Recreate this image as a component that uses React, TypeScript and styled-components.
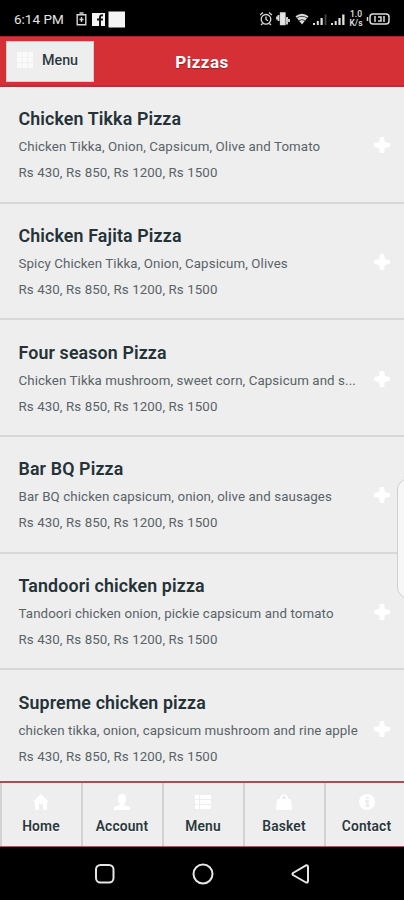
import React from 'react';
import styled, { createGlobalStyle } from 'styled-components';

const GlobalStyle = createGlobalStyle`
  * { box-sizing: border-box; }
  body { margin: 0; background: #000; font-family: Roboto, "Liberation Sans", sans-serif; }
`;

const Screen = styled.div`
  width: 404px;
  height: 900px;
  position: relative;
  display: flex;
  flex-direction: column;
  overflow: hidden;
  background: #000;
`;

const StatusBar = styled.div`
  height: 36px;
  flex: none;
  display: flex;
  align-items: center;
  justify-content: space-between;
  padding: 1px 13px 0 14px;
  color: #e4e4e4;
`;

const Clock = styled.span`
  width: 62px;
  font-size: 13.5px;
  line-height: 18px;
  padding-top: 1px;
`;

const StatusGroup = styled.div`
  display: flex;
  align-items: center;
`;

const Speed = styled.div`
  width: 16px;
  margin-right: 2px;
  font-size: 8.5px;
  line-height: 9px;
  font-weight: 500;
  text-align: center;
`;

const Header = styled.header`
  height: 51px;
  flex: none;
  display: grid;
  grid-template-columns: 1fr auto 1fr;
  align-items: center;
  padding: 0 6px;
  background: #d63037;
  border-top: 1px solid #a3272b;
  border-bottom: 2px solid #a9383c;
`;

const MenuButton = styled.button`
  width: 88px;
  height: 41px;
  padding: 0 0 2px 10px;
  display: flex;
  align-items: center;
  gap: 9px;
  border: 1px solid #d5cccc;
  background: #eeeeee;
  color: #2b383d;
  font: 500 14.3px/20px Roboto, sans-serif;
  text-shadow: 0 1px 0 #fff;
`;

const Title = styled.h1`
  margin: 2px 0 0;
  font-size: 17px;
  letter-spacing: 0.5px;
  font-weight: 700;
  line-height: 22px;
  color: #fff;
  text-shadow: 0 1px 1px #8d2328;
`;

const List = styled.main`
  height: 694px;
  flex: none;
  overflow: hidden;
  background: #eeeeee;
`;

const Row = styled.article`
  height: 116.7px;
  padding: 20.4px 14px 0 18.5px;
  display: flex;
  justify-content: space-between;
  border-bottom: 2px solid #d8d8d8;
`;

const RowText = styled.div`
  width: 342px;
  white-space: nowrap;
`;

const Name = styled.h2`
  margin: 0 0 3px;
  font-size: 17.8px;
  letter-spacing: 0.14px;
  font-weight: 600;
  line-height: 24px;
  color: #253237;
`;

const Detail = styled.p`
  margin: 0;
  font-size: 13.3px;
  letter-spacing: 0.1px;
  line-height: 26px;
  color: #596368;
`;

const AddIcon = styled.svg`
  flex: none;
  margin-top: 28px;
  margin-right: -1px;
`;

const Tabs = styled.nav`
  height: 66px;
  flex: none;
  display: grid;
  grid-template-columns: repeat(4, 81px) 80px;
  background: #eeeeee;
  border-top: 2px solid #9f5155;
  border-bottom: 1px solid #a35b5f;
  overflow: hidden;
`;

const Tab = styled.div`
  display: flex;
  flex-direction: column;
  align-items: center;
  padding: 10px 1px 0 0;
  border-left: 2px solid #d2d2d2;
  color: #2b383d;
  font-size: 13.8px;
  letter-spacing: 0.15px;
  font-weight: 600;
  line-height: 18px;
  gap: 6px;
  text-shadow: 0 1px 0 #fff;

  &:last-child {
    padding: 10px 0 0 3px;
  }
`;

const SystemNav = styled.div`
  flex: 1;
  display: flex;
  justify-content: center;
  align-items: center;
  gap: 76px;
  padding-left: 1px;
`;

const EdgeHandle = styled.div`
  position: absolute;
  left: 397px;
  top: 478px;
  width: 24px;
  height: 121px;
  border: 1px solid #cfcfcf;
  border-radius: 14px;
  background: #f7f7f7;
`;

const prices = 'Rs 430, Rs 850, Rs 1200, Rs 1500';
const pizzas = [
  ['Chicken Tikka Pizza', 'Chicken Tikka, Onion, Capsicum, Olive and Tomato'],
  ['Chicken Fajita Pizza', 'Spicy Chicken Tikka, Onion, Capsicum, Olives'],
  ['Four season Pizza', 'Chicken Tikka mushroom, sweet corn, Capsicum and s...'],
  ['Bar BQ Pizza', 'Bar BQ chicken capsicum, onion, olive and sausages'],
  ['Tandoori chicken pizza', 'Tandoori chicken onion, pickie capsicum and tomato'],
  ['Supreme chicken pizza', 'chicken tikka, onion, capsicum mushroom and rine apple'],
];

const tabIcons: Record<string, React.ReactNode> = {
  Home: <path d="M9 1 1 9h2v8h4v-6h4v6h4V9h2z" />,
  Account: <path d="M9 1c3 0 4 2 4 5s-1 4-2 5v1l6 2v3H1v-3l6-2v-1C6 10 5 9 5 6s1-5 4-5z" />,
  Menu: <path d="M1 2h4v4H1zM6 2h11v4H6zM1 7h4v4H1zM6 7h11v4H6zM1 12h4v4H1zM6 12h11v4H6z" />,
  Basket: <path fillRule="evenodd" d="M2 6h3V5c0-5 8-5 8 0v1h3l1 11H1zM7 6h4V5c0-3-4-3-4 0z" />,
  Contact: <path fillRule="evenodd" d="M9 1a8 8 0 1 1 0 16A8 8 0 0 1 9 1zM8 4v2h3V4zM7 7v2h1v4H7v1h5v-1h-1V7z" />,
};

const Battery = () => (
  <svg width="11" height="14" viewBox="0 0 11 14" fill="none" stroke="#d8d8d8" strokeWidth="1.4">
    <path d="M1.2 2.7h8.6v10H1.2zM3.5 1h4M5.5 5v5M3.5 7.5h4" />
  </svg>
);

const StatusIcons = () => (
  <svg width="88" height="16" viewBox="0 0 88 16" fill="none" stroke="#dcdcdc" strokeWidth="1.3">
    <circle cx="6" cy="8.3" r="4.8" />
    <path d="M6 5.5v3l2 1.2M0 4l3-2.5M9 1.5 12 4M2.5 12.5 1 14M9.5 12.5 11 14" />
    <path d="M20.5 2h4.5v11.5h-4.5z" fill="#e5e5e5" />
    <path d="M18.5 4v6M17 5.5v3M27 6v7.5M29 8v3" strokeWidth="1.8" />
    <path d="M35.5 5.3q6.5-5 13 0L42 13.5z" fill="#dcdcdc" stroke="none" />
    <path d="M36.8 7q5.2-3.4 10.4 0M39 9.6q3-2 6 0" stroke="#333" strokeWidth="0.9" />
    <g fill="#e0e0e0" stroke="none">
      <path d="M53 12h2v2h-2zM56.8 10h2v4h-2zM60.5 7h2.2v7h-2.2z" />
      <path d="M64.6 3.5h1.8V14h-1.8z" fill="#444" />
      <path d="M71 12h2v2h-2zM74.7 10h2v4h-2zM78.4 7h2.2v7h-2.2zM82.2 3.5h2.3V14h-2.3z" />
    </g>
  </svg>
);

export default function App() {
  return (
    <>
      <GlobalStyle />
      <Screen>
        <StatusBar>
          <StatusGroup>
            <Clock>6:14 PM</Clock>
            <Battery />
            <svg width="39" height="18" viewBox="0 0 39 18">
              <path d="M5 3h13v13H5zM21.5 1.5H38v16H21.5z" fill="#f4f4f4" />
              <path d="M16 5.5q-3-.7-3 2V16M10 9.5h6" fill="none" stroke="#111" strokeWidth="2" />
            </svg>
          </StatusGroup>
          <StatusGroup>
            <StatusIcons />
            <Speed>1.0<br />K/s</Speed>
            <svg width="25" height="14" viewBox="0 0 25 14" fill="none" stroke="#dcdcdc" strokeWidth="1.5">
              <rect x="4" y="2" width="19" height="10" rx="3" />
              <path d="M1.5 5v4M9 4v6M12 5h3v4h-3M18 4v6" />
            </svg>
          </StatusGroup>
        </StatusBar>
        <Header>
          <MenuButton>
            <svg width="16" height="16" viewBox="0 0 16 16" fill="#fbfbfb">
              <path d="M0 0h4.7v4.7H0zM5.6 0h4.7v4.7H5.6zM11.2 0H16v4.7h-4.8zM0 5.6h4.7v4.7H0zM5.6 5.6h4.7v4.7H5.6zM11.2 5.6H16v4.7h-4.8zM0 11.2h4.7V16H0zM5.6 11.2h4.7V16H5.6zM11.2 11.2H16V16h-4.8z" />
            </svg>
            Menu
          </MenuButton>
          <Title>Pizzas</Title>
        </Header>
        <List>
          {pizzas.map(([name, toppings]) => (
            <Row key={name}>
              <RowText>
                <Name>{name}</Name>
                <Detail>{toppings}</Detail>
                <Detail>{prices}</Detail>
              </RowText>
              <AddIcon width="18" height="20" viewBox="0 0 18 20" fill="#fff">
                <path d="M7 2h4l1 5 5 1.2v3.6L12 13l-1 5H7l-1-5-5-1.2V8.2L6 7z" />
              </AddIcon>
            </Row>
          ))}
        </List>
        <Tabs>
          {Object.entries(tabIcons).map(([label, icon]) => (
            <Tab key={label}>
              <svg width="18" height="18" viewBox="0 0 18 18" fill="#fff">{icon}</svg>
              {label}
            </Tab>
          ))}
        </Tabs>
        <SystemNav>
          <svg width="22" height="22" viewBox="0 0 22 22" fill="none" stroke="#e6e6e6" strokeWidth="2">
            <rect x="2" y="2" width="17.5" height="17.5" rx="4.5" />
          </svg>
          <svg width="22" height="22" viewBox="0 0 22 22" fill="none" stroke="#e6e6e6" strokeWidth="2">
            <circle cx="11" cy="11" r="9.5" />
          </svg>
          <svg width="22" height="22" viewBox="0 0 22 22" fill="none" stroke="#e6e6e6" strokeWidth="2" strokeLinejoin="round">
            <path d="M16 2.3 3 10q-1 1 0 2l13 7.5q2 .5 2-1.5V4q0-2-2-1.7z" />
          </svg>
        </SystemNav>
        <EdgeHandle />
      </Screen>
    </>
  );
}
